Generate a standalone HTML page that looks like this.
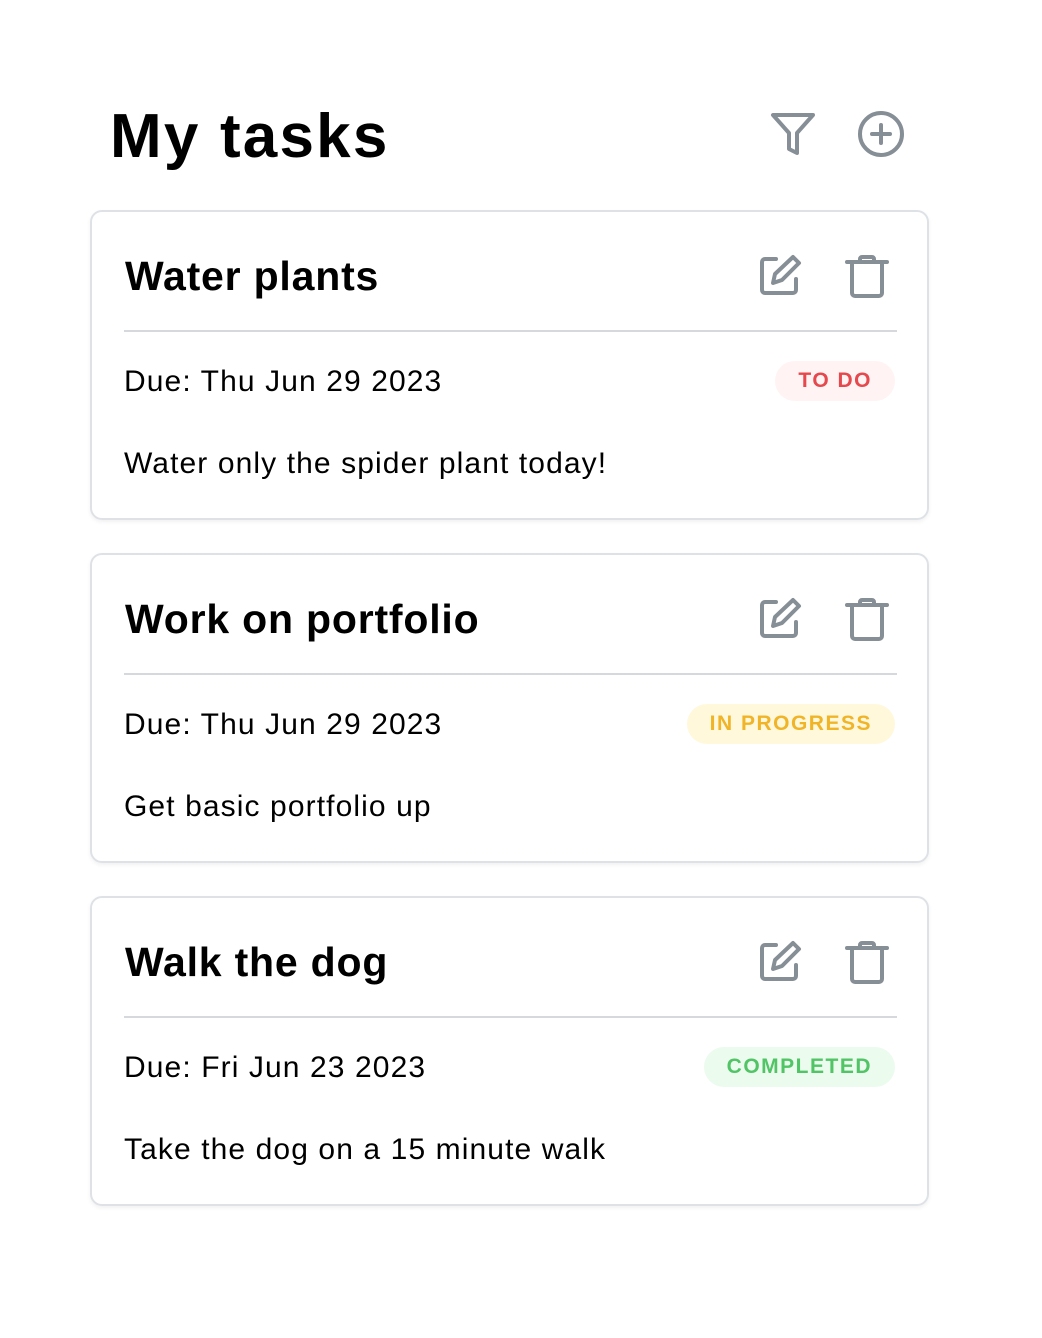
<!DOCTYPE html>
<html><head><style>
*{margin:0;padding:0;box-sizing:border-box}
body{width:1042px;height:1338px;background:#fff;font-family:"Liberation Sans",sans-serif;color:#000;position:relative;overflow:hidden}
h1{position:absolute;left:110px;top:98px;font-size:62px;font-weight:bold;letter-spacing:2.2px;line-height:78px}
.card{position:absolute;left:90px;width:839px;height:310px;border:2px solid #dee2e6;border-radius:12px;box-shadow:0 2px 4px rgba(0,0,0,.06)}
.t{position:absolute;left:33px;top:39px;font-size:41px;font-weight:bold;letter-spacing:0.8px;line-height:50px}
.hr{position:absolute;left:32px;width:773px;top:118px;height:2px;background:#d5d9dd}
.due{position:absolute;left:32px;top:152px;font-size:30px;letter-spacing:1.1px;line-height:36px}
.desc{position:absolute;left:32px;top:234px;font-size:30px;letter-spacing:1.1px;line-height:36px}
.b{position:absolute;right:32px;top:149px;height:40px;border-radius:20px;padding:0 23px;font-size:21px;font-weight:bold;letter-spacing:1.5px;line-height:40px}
.ic{position:absolute;top:40px}
svg{fill:none;stroke:#868e96;stroke-width:4;stroke-linecap:round;stroke-linejoin:round}
</style></head><body>
<h1>My tasks</h1>
<svg style="position:absolute;left:769px;top:111px" width="48" height="46" viewBox="0 0 48 46"><path d="M4 4h40L28 22v20l-8-4V22z"/></svg>
<svg style="position:absolute;left:857px;top:110px" width="48" height="48" viewBox="0 0 48 48"><circle cx="24" cy="24" r="21"/><path d="M24 15v18M15 24h18"/></svg>

<div class="card" style="top:210px">
<div class="t">Water plants</div>
<svg class="ic" style="left:664px" width="48" height="48" viewBox="0 0 48 48"><path d="M20 7H9a3 3 0 0 0-3 3v28a3 3 0 0 0 3 3h28a3 3 0 0 0 3-3V27"/><path d="M37 5l6 6-17 17-9 3 2-9z"/></svg>
<svg class="ic" style="left:752px" width="46" height="48" viewBox="0 0 46 48"><path d="M3 10h40M16 10V7a2 2 0 0 1 2-2h10a2 2 0 0 1 2 2v3M8 10v31a3 3 0 0 0 3 3h24a3 3 0 0 0 3-3V10"/></svg>
<div class="hr"></div>
<div class="due">Due: Thu Jun 29 2023</div>
<div class="b" style="color:#e5484d;background:#fff3f3">TO DO</div>
<div class="desc">Water only the spider plant today!</div>
</div>

<div class="card" style="top:553px">
<div class="t">Work on portfolio</div>
<svg class="ic" style="left:664px" width="48" height="48" viewBox="0 0 48 48"><path d="M20 7H9a3 3 0 0 0-3 3v28a3 3 0 0 0 3 3h28a3 3 0 0 0 3-3V27"/><path d="M37 5l6 6-17 17-9 3 2-9z"/></svg>
<svg class="ic" style="left:752px" width="46" height="48" viewBox="0 0 46 48"><path d="M3 10h40M16 10V7a2 2 0 0 1 2-2h10a2 2 0 0 1 2 2v3M8 10v31a3 3 0 0 0 3 3h24a3 3 0 0 0 3-3V10"/></svg>
<div class="hr"></div>
<div class="due">Due: Thu Jun 29 2023</div>
<div class="b" style="color:#f0b429;background:#fff8db">IN PROGRESS</div>
<div class="desc">Get basic portfolio up</div>
</div>

<div class="card" style="top:896px">
<div class="t">Walk the dog</div>
<svg class="ic" style="left:664px" width="48" height="48" viewBox="0 0 48 48"><path d="M20 7H9a3 3 0 0 0-3 3v28a3 3 0 0 0 3 3h28a3 3 0 0 0 3-3V27"/><path d="M37 5l6 6-17 17-9 3 2-9z"/></svg>
<svg class="ic" style="left:752px" width="46" height="48" viewBox="0 0 46 48"><path d="M3 10h40M16 10V7a2 2 0 0 1 2-2h10a2 2 0 0 1 2 2v3M8 10v31a3 3 0 0 0 3 3h24a3 3 0 0 0 3-3V10"/></svg>
<div class="hr"></div>
<div class="due">Due: Fri Jun 23 2023</div>
<div class="b" style="color:#51c466;background:#ebfbee">COMPLETED</div>
<div class="desc">Take the dog on a 15 minute walk</div>
</div>
</body></html>
